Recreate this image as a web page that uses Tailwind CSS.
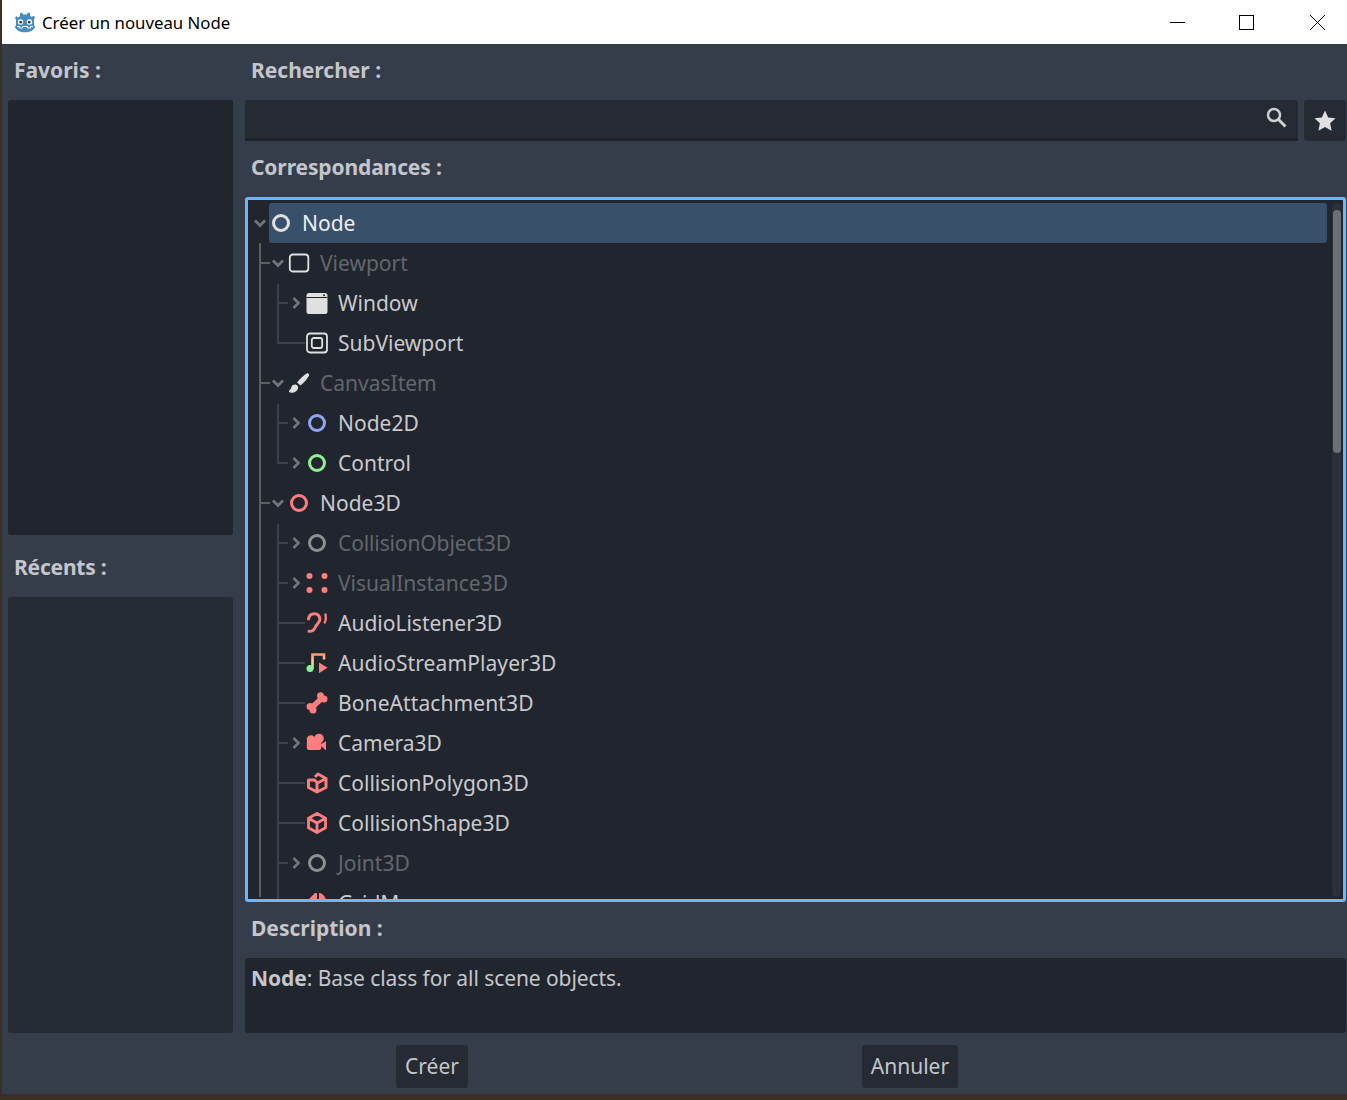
<!DOCTYPE html>
<html lang="fr">
<head>
  <meta charset="UTF-8">
  <title>Créer un nouveau Node</title>
  <script src="https://cdn.jsdelivr.net/npm/@tailwindcss/browser@4"></script>
</head>
<body class="bg-[#3a2e25] h-[1100px] overflow-hidden font-['Noto_Sans',sans-serif]">
  <div class="ml-[2px] h-[1094px] flex flex-col">
    <!-- Title bar -->
    <header class="h-[44px] bg-white flex items-center text-black">
      <svg class="ml-[12px] w-[22px] h-[22px]" viewBox="0 0 22 22">
        <path fill="#478cbf" d="M8 1.500l1.200 2h3.600l1.200-2 2.200.8-.2 2.400 1.600 1.200 2-1.200 1.400 1.600-1 2v6.200c1 .4 1 1.200 1 1.700-1.500 3-5 5-10 5s-8.500-2-10-5c0-.5 0-1.300 1-1.700V8.800l-1-2 1.400-1.600 2 1.200 1.600-1.200-.2-2.400z"/>
        <circle cx="6.500" cy="11" r="2.700" fill="#fff"/><circle cx="15.500" cy="11" r="2.700" fill="#fff"/>
        <circle cx="6.800" cy="11.200" r="1.400" fill="#414042"/><circle cx="15.200" cy="11.200" r="1.400" fill="#414042"/>
        <path fill="none" stroke="#fff" stroke-width="1" d="M3 15.500h2.500v1.500h3v-1.500h5v1.500h3v-1.500H19"/>
      </svg>
      <span class="ml-[6px] mt-[2px] text-[16.800px] leading-none">Créer un nouveau Node</span>
      <div class="ml-auto flex items-center pr-[22px]">
        <svg class="w-[15px] h-[15px]" viewBox="0 0 15 15"><path stroke="#000" d="M0 7.500h15"/></svg>
        <svg class="ml-[54px] w-[15px] h-[15px]" viewBox="0 0 15 15"><rect x=".5" y=".5" width="14" height="14" fill="none" stroke="#000"/></svg>
        <svg class="ml-[56px] w-[15px] h-[15px]" viewBox="0 0 15 15"><path stroke="#000" d="M0 0l15 15M15 0L0 15"/></svg>
      </div>
    </header>

    <!-- Dialog body -->
    <main class="flex-1 bg-[#363d4a] flex flex-col">
      <div class="flex h-[989px] pl-[6px] pr-[1px] gap-[12px]">
        <!-- Favourites and recents -->
        <aside class="w-[225px] flex flex-col">
          <div class="h-[56px] flex items-center pl-[6px] text-[21px] font-bold text-[#c4c6cb] pb-[2px]">Favoris :</div>
          <div class="h-[435px] bg-[#21252d] rounded-[3px]"></div>
          <div class="h-[62px] flex items-center pl-[6px] text-[21px] font-bold text-[#c4c6cb] pt-[4px] tracking-[-0.2px]">Récents :</div>
          <div class="h-[436px] bg-[#252b35] rounded-[3px]"></div>
        </aside>

        <section class="flex-1 flex flex-col min-w-0">
          <div class="h-[56px] flex items-center pl-[6px] text-[21px] font-bold text-[#c4c6cb] pb-[2px]">Rechercher :</div>
          <div class="h-[41px] flex gap-[6px]">
            <div class="flex-1 bg-[#252a33] border-b-[3px] border-[#1f2329] rounded-t-[3px] flex items-center justify-end pr-[10px]">
              <svg class="w-[22px] h-[22px] mb-[3px]" viewBox="0 0 22 22">
                <circle cx="8" cy="8" r="6" fill="none" stroke="#cfcfcf" stroke-width="2.500"/>
                <path d="M12.500 12.500l7 7" stroke="#cfcfcf" stroke-width="3"/>
              </svg>
            </div>
            <button class="w-[42px] bg-[#252a33] rounded-[3px] flex items-center justify-center">
              <svg class="w-[22px] h-[22px] mt-[1px]" viewBox="0 0 22 22"><path fill="#e0e0e0" d="M11 .5l3.200 7 7.300.8-5.400 5 1.500 7.400L11 17l-6.600 3.700 1.500-7.400-5.400-5 7.300-.8z"/></svg>
            </button>
          </div>
          <div class="h-[56px] flex items-center pl-[6px] text-[21px] font-bold text-[#c4c6cb] pb-[2px] tracking-[-0.12px]">Correspondances :</div>

          <!-- Matches tree -->
          <div class="relative h-[705px] border-[3px] border-[#70b5f5] rounded-[3px] bg-[#21252d] overflow-hidden text-[21px] text-[#c8cacd]">
            <div class="pt-[3px] h-[699px] overflow-hidden">
              <div class="flex items-center h-10 pl-[4px] pr-[16px]">
                <svg class="w-4 h-4" viewBox="0 0 16 16"><path d="M3 5.500l5 5 5-5" fill="none" stroke="#73757b" stroke-width="2.700"/></svg>
                <div class="flex-1 h-10 ml-[1px] pl-[1px] flex items-center bg-[#39506b] rounded-[3px] text-[#eeeff0]">
                  <svg class="w-[22px] h-[22px]" viewBox="0 0 22 22"><circle cx="11" cy="11" r="7.500" fill="none" stroke="#e0e0e0" stroke-width="3"/></svg>
                  <span class="ml-[10px] mt-[2px]">Node</span>
                </div>
              </div>

              <div class="flex items-center h-10 pl-[22px]">
                <svg class="w-4 h-4" viewBox="0 0 16 16"><path d="M3 5.500l5 5 5-5" fill="none" stroke="#73757b" stroke-width="2.700"/></svg>
                <svg class="ml-[2px] w-[22px] h-[22px]" viewBox="0 0 22 22"><rect x="1.800" y="2.500" width="18.500" height="17" rx="3" fill="none" stroke="#e0e0e0" stroke-width="1.800"/></svg>
                <span class="ml-[10px] mt-[2px] text-[#63666d]">Viewport</span>
              </div>

              <div class="flex items-center h-10 pl-[40px]">
                <svg class="w-4 h-4" viewBox="0 0 16 16"><path d="M5.500 3l5 5-5 5" fill="none" stroke="#73757b" stroke-width="2.700"/></svg>
                <svg class="ml-[2px] w-[22px] h-[22px]" viewBox="0 0 22 22"><rect x=".5" y="1" width="21" height="21" rx="2.500" fill="#e0e0e0"/><path d="M.5 5.500h21" stroke="#21252d" stroke-width="1"/><circle cx="18" cy="3.200" r="1" fill="#21252d"/></svg>
                <span class="ml-[10px] mt-[2px]">Window</span>
              </div>

              <div class="flex items-center h-10 pl-[40px]">
                <span class="w-4"></span>
                <svg class="ml-[2px] w-[22px] h-[22px]" viewBox="0 0 22 22"><rect x="1" y="1.500" width="20" height="19" rx="3" fill="none" stroke="#e0e0e0" stroke-width="1.800"/><rect x="5.800" y="6" width="10.400" height="10" rx="2" fill="none" stroke="#e0e0e0" stroke-width="1.800"/></svg>
                <span class="ml-[10px] mt-[2px]">SubViewport</span>
              </div>

              <div class="flex items-center h-10 pl-[22px]">
                <svg class="w-4 h-4" viewBox="0 0 16 16"><path d="M3 5.500l5 5 5-5" fill="none" stroke="#73757b" stroke-width="2.700"/></svg>
                <svg class="ml-[2px] w-[22px] h-[22px]" viewBox="0 0 22 22"><path fill="#e0e0e0" d="M19.500 1c1.300.3 2 1.500 1.500 2.800-2 3.500-5 7-8.500 9.700L9 10.500C12 6.800 16 2.800 19.500 1zM7.500 12.500c2 .5 3 2 2.500 4-.7 3-4.500 5-8 4-1-.5-1.500-1.500-.5-2.500 2-1 1.500-2.500 2-3.500.8-1.300 2.500-2.300 4-2z"/></svg>
                <span class="ml-[10px] mt-[2px] text-[#63666d]">CanvasItem</span>
              </div>

              <div class="flex items-center h-10 pl-[40px]">
                <svg class="w-4 h-4" viewBox="0 0 16 16"><path d="M5.500 3l5 5-5 5" fill="none" stroke="#73757b" stroke-width="2.700"/></svg>
                <svg class="ml-[2px] w-[22px] h-[22px]" viewBox="0 0 22 22"><circle cx="11" cy="11" r="7.500" fill="none" stroke="#8da5f3" stroke-width="3"/></svg>
                <span class="ml-[10px] mt-[2px]">Node2D</span>
              </div>

              <div class="flex items-center h-10 pl-[40px]">
                <svg class="w-4 h-4" viewBox="0 0 16 16"><path d="M5.500 3l5 5-5 5" fill="none" stroke="#73757b" stroke-width="2.700"/></svg>
                <svg class="ml-[2px] w-[22px] h-[22px]" viewBox="0 0 22 22"><circle cx="11" cy="11" r="7.500" fill="none" stroke="#8eef97" stroke-width="3"/></svg>
                <span class="ml-[10px] mt-[2px]">Control</span>
              </div>

              <div class="flex items-center h-10 pl-[22px]">
                <svg class="w-4 h-4" viewBox="0 0 16 16"><path d="M3 5.500l5 5 5-5" fill="none" stroke="#73757b" stroke-width="2.700"/></svg>
                <svg class="ml-[2px] w-[22px] h-[22px]" viewBox="0 0 22 22"><circle cx="11" cy="11" r="7.500" fill="none" stroke="#fc7f7f" stroke-width="3"/></svg>
                <span class="ml-[10px] mt-[2px]">Node3D</span>
              </div>

              <div class="flex items-center h-10 pl-[40px]">
                <svg class="w-4 h-4" viewBox="0 0 16 16"><path d="M5.500 3l5 5-5 5" fill="none" stroke="#73757b" stroke-width="2.700"/></svg>
                <svg class="ml-[2px] w-[22px] h-[22px]" viewBox="0 0 22 22"><circle cx="11" cy="11" r="7.500" fill="none" stroke="#8f8f8f" stroke-width="3"/></svg>
                <span class="ml-[10px] mt-[2px] text-[#63666d] tracking-[-0.12px]">CollisionObject3D</span>
              </div>

              <div class="flex items-center h-10 pl-[40px]">
                <svg class="w-4 h-4" viewBox="0 0 16 16"><path d="M5.500 3l5 5-5 5" fill="none" stroke="#73757b" stroke-width="2.700"/></svg>
                <svg class="ml-[2px] w-[22px] h-[22px]" viewBox="0 0 22 22"><g fill="#fc7f7f"><circle cx="3.500" cy="4" r="3"/><circle cx="18.500" cy="4" r="3"/><circle cx="3.500" cy="18" r="3"/><circle cx="18.500" cy="18" r="3"/></g></svg>
                <span class="ml-[10px] mt-[2px] text-[#63666d]">VisualInstance3D</span>
              </div>

              <div class="flex items-center h-10 pl-[40px]">
                <span class="w-4"></span>
                <svg class="ml-[2px] w-[22px] h-[22px]" viewBox="0 0 22 22"><g fill="none" stroke="#fc7f7f" stroke-linecap="round"><path stroke-width="3" d="M2.500 7C3 3.500 5.500 1.800 8.500 1.800c3.500 0 5.700 2.700 5.300 6-.4 3-3.300 4.500-4.300 7-1 2.700-3.500 5-6.500 4.500"/><path stroke-width="2.400" d="M19.500 2.500c.7 3 .5 5.500-.7 8"/></g></svg>
                <span class="ml-[10px] mt-[2px]">AudioListener3D</span>
              </div>

              <div class="flex items-center h-10 pl-[40px]">
                <span class="w-4"></span>
                <svg class="ml-[2px] w-[22px] h-[22px]" viewBox="0 0 22 22">
                  <defs><linearGradient id="note" gradientUnits="userSpaceOnUse" x1="0" y1="1" x2="0" y2="20"><stop offset="0" stop-color="#ff8f70"/><stop offset=".45" stop-color="#ffd684"/><stop offset="1" stop-color="#8eef97"/></linearGradient></defs>
                  <path d="M6.500 17V2.500h11.500v5" fill="none" stroke="url(#note)" stroke-width="2.600"/>
                  <circle cx="4" cy="16.500" r="3.500" fill="#8eef97"/>
                  <path d="M13 10.500l8.500 5.300L13 21.200z" fill="#fc7f7f"/>
                </svg>
                <span class="ml-[10px] mt-[2px] tracking-[0.1px]">AudioStreamPlayer3D</span>
              </div>

              <div class="flex items-center h-10 pl-[40px]">
                <span class="w-4"></span>
                <svg class="ml-[2px] w-[22px] h-[22px]" viewBox="0 0 22 22"><g fill="#fc7f7f"><circle cx="4" cy="14.500" r="3.500"/><circle cx="7" cy="18" r="3.500"/><circle cx="14.500" cy="3.800" r="3.500"/><circle cx="18" cy="7" r="3.500"/></g><path d="M5 16.500L16.500 5.500" stroke="#fc7f7f" stroke-width="5.500"/></svg>
                <span class="ml-[10px] mt-[2px] tracking-[0.1px]">BoneAttachment3D</span>
              </div>

              <div class="flex items-center h-10 pl-[40px]">
                <svg class="w-4 h-4" viewBox="0 0 16 16"><path d="M5.500 3l5 5-5 5" fill="none" stroke="#73757b" stroke-width="2.700"/></svg>
                <svg class="ml-[2px] w-[22px] h-[22px]" viewBox="0 0 22 22"><g fill="#fc7f7f"><circle cx="5" cy="7.500" r="4.200"/><circle cx="13" cy="6.500" r="4.800"/><rect x=".8" y="8" width="14.500" height="10" rx="2.500"/><path d="M14 13l6-4v9.500z"/></g></svg>
                <span class="ml-[10px] mt-[2px]">Camera3D</span>
              </div>

              <div class="flex items-center h-10 pl-[40px]">
                <span class="w-4"></span>
                <svg class="ml-[2px] w-[22px] h-[22px]" viewBox="0 0 22 22"><g fill="none" stroke="#fc7f7f" stroke-width="3" stroke-linejoin="round"><path d="M9 5l3-3 8 4.500v9L11 20l-8.500-4.500V8h6l3 3 8.500-4.500M11 11v9"/></g></svg>
                <span class="ml-[10px] mt-[2px]">CollisionPolygon3D</span>
              </div>

              <div class="flex items-center h-10 pl-[40px]">
                <span class="w-4"></span>
                <svg class="ml-[2px] w-[22px] h-[22px]" viewBox="0 0 22 22"><g fill="none" stroke="#fc7f7f" stroke-width="2.800" stroke-linejoin="round"><path d="M11 1.500l8.500 4.700v9.600L11 20.500l-8.500-4.700V6.200zM2.500 6.200L11 11l8.500-4.800M11 11v9.500"/></g></svg>
                <span class="ml-[10px] mt-[2px]">CollisionShape3D</span>
              </div>

              <div class="flex items-center h-10 pl-[40px]">
                <svg class="w-4 h-4" viewBox="0 0 16 16"><path d="M5.500 3l5 5-5 5" fill="none" stroke="#73757b" stroke-width="2.700"/></svg>
                <svg class="ml-[2px] w-[22px] h-[22px]" viewBox="0 0 22 22"><circle cx="11" cy="11" r="7.500" fill="none" stroke="#8f8f8f" stroke-width="3"/></svg>
                <span class="ml-[10px] mt-[2px] text-[#63666d]">Joint3D</span>
              </div>

              <div class="flex items-center h-10 pl-[40px]">
                <span class="w-4"></span>
                <svg class="ml-[2px] w-[22px] h-[22px]" viewBox="0 0 22 22"><g fill="#fc7f7f"><path d="M2 8l7-7h2v7zM13 1c3 0 6 3 7 7h-7z"/><rect x="2" y="10" width="18" height="9"/></g></svg>
                <span class="ml-[10px] mt-[2px]">GridMap</span>
              </div>
            </div>

            <!-- Relationship lines, laid over the rows -->
            <div class="absolute left-[11px] top-[43px] w-[2px] h-[654px] bg-[#5c5e64]"></div>
            <div class="absolute left-[13px] top-[62px] w-[9px] h-[2px] bg-[#5c5e64]"></div>
            <div class="absolute left-[13px] top-[182px] w-[9px] h-[2px] bg-[#5c5e64]"></div>
            <div class="absolute left-[13px] top-[302px] w-[9px] h-[2px] bg-[#5c5e64]"></div>

            <div class="absolute left-[29px] top-[84px] w-[2px] h-[60px] bg-[#3c4048]"></div>
            <div class="absolute left-[31px] top-[102px] w-[9px] h-[2px] bg-[#3c4048]"></div>
            <div class="absolute left-[31px] top-[142px] w-[26px] h-[2px] bg-[#3c4048]"></div>

            <div class="absolute left-[29px] top-[204px] w-[2px] h-[60px] bg-[#3c4048]"></div>
            <div class="absolute left-[31px] top-[222px] w-[9px] h-[2px] bg-[#3c4048]"></div>
            <div class="absolute left-[31px] top-[262px] w-[9px] h-[2px] bg-[#3c4048]"></div>

            <div class="absolute left-[29px] top-[324px] w-[2px] h-[375px] bg-[#3c4048]"></div>
            <div class="absolute left-[31px] top-[342px] w-[9px] h-[2px] bg-[#3c4048]"></div>
            <div class="absolute left-[31px] top-[382px] w-[9px] h-[2px] bg-[#3c4048]"></div>
            <div class="absolute left-[31px] top-[422px] w-[26px] h-[2px] bg-[#3c4048]"></div>
            <div class="absolute left-[31px] top-[462px] w-[26px] h-[2px] bg-[#3c4048]"></div>
            <div class="absolute left-[31px] top-[502px] w-[26px] h-[2px] bg-[#3c4048]"></div>
            <div class="absolute left-[31px] top-[542px] w-[9px] h-[2px] bg-[#3c4048]"></div>
            <div class="absolute left-[31px] top-[582px] w-[26px] h-[2px] bg-[#3c4048]"></div>
            <div class="absolute left-[31px] top-[622px] w-[26px] h-[2px] bg-[#3c4048]"></div>
            <div class="absolute left-[31px] top-[662px] w-[9px] h-[2px] bg-[#3c4048]"></div>

            <!-- Scrollbar -->
            <div class="absolute left-[1084px] top-[3px] w-[9px] h-[694px] bg-[#2c3038] rounded-full"></div>
            <div class="absolute left-[1085px] top-[10px] w-[8px] h-[243px] bg-[#6c6f75] rounded-full"></div>
          </div>

          <div class="h-[56px] flex items-center pl-[6px] text-[21px] font-bold text-[#c4c6cb] pb-[2px]">Description :</div>
          <div class="h-[75px] bg-[#21252d] rounded-[3px] px-[6px] pt-[5px] text-[21px] text-[#c4c6cb] tracking-[-0.07px]"><b>Node</b>: Base class for all scene objects.</div>
        </section>
      </div>

      <!-- Footer buttons -->
      <footer class="flex pt-[12px] pl-[394px] text-[21px] text-[#c4c6cb]">
        <button class="w-[72px] h-[43px] bg-[#252a33] rounded-[3px]">Créer</button>
        <button class="ml-[394px] w-[96px] h-[43px] bg-[#252a33] rounded-[3px]">Annuler</button>
      </footer>
    </main>
  </div>
</body>
</html>
